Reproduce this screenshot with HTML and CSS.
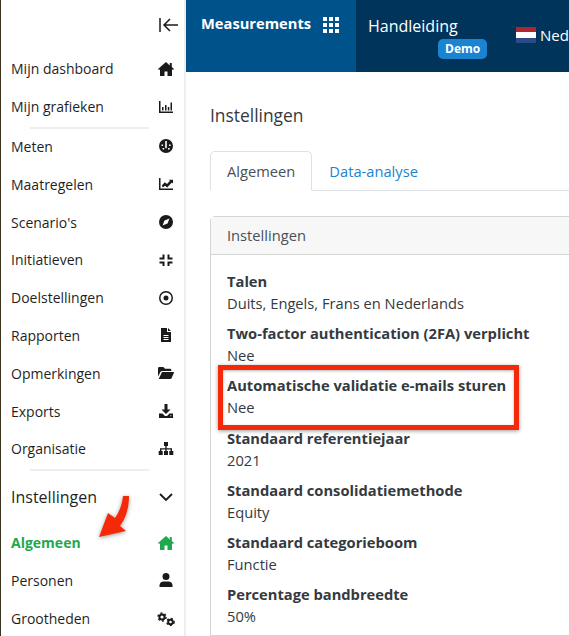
FILE: index.html
```html
<!DOCTYPE html>
<html lang="nl">
<head>
    <meta charset="UTF-8">
    <title>Instellingen</title>
    <link rel="stylesheet" href="styles.css">
</head>
<body>
    <div class="edge"></div>
    <aside class="sidebar">
        <div class="collapse">
            <svg class="collapse-icon" viewBox="0 0 20 16"><path d="M1 1v14M19 8H5M11 2L5 8l6 6"/></svg>
        </div>
        <ul class="menu">
            <li>Mijn dashboard <svg class="icon" viewBox="0 0 16 14"><path d="M8 0L0 7l1 1 1-.8V14h4.500V9.500h3V14H14V7.200l1 .8 1-1-2.200-2V1h-2v2.600z"/></svg></li>
            <li>Mijn grafieken <svg class="icon" viewBox="0 0 16 14"><path d="M1 1h1.500v10.500H15V13H1zM4 7h1.500v3.500H4zM7 5h1.500v5.500H7zM9.800 7h1.500v3.500H9.800zM12.500 2.500H14v8h-1.500z"/></svg></li>
            <li class="rule"></li>
            <li>Meten <svg class="icon" viewBox="0 0 16 16"><path fill-rule="evenodd" d="M8 1a7 7 0 1 1 0 14A7 7 0 0 1 8 1zM7.200 3v7a1.500 1.500 0 0 0 1.600 0V3zM3.500 6.500v1.600h1.600V6.500zM11 6.500v1.600h1.600V6.500zM4.600 10v1.600h1.600V10zM10 10v1.600h1.600V10z"/></svg></li>
            <li>Maatregelen <svg class="icon" viewBox="0 0 16 14"><path d="M1 1h1.500v10.500H15V13H1zM3.800 8.500l3-3.200 2.200 1.800 3-3.400-1.200-1H15v3.800l-1.100-1.100-4.700 5.100L7 8.700 4.800 10.500z"/></svg></li>
            <li>Scenario's <svg class="icon" viewBox="0 0 16 16"><path fill-rule="evenodd" d="M8 1a7 7 0 1 1 0 14A7 7 0 0 1 8 1zM11.500 4.500L6.500 6.500l-2 5 5-2z"/></svg></li>
            <li>Initiatieven <svg class="icon" viewBox="0 0 16 16"><path d="M4.500 2.500h2v5h-5v-2h3zM9.500 2.500h2v3h3v2h-5zM1.500 9.500h5V14h-2v-2.500h-3zM9.500 9.500h5v2h-3V14h-2z"/></svg></li>
            <li>Doelstellingen <svg class="icon" viewBox="0 0 16 16"><path fill-rule="evenodd" d="M8 1a7 7 0 1 1 0 14A7 7 0 0 1 8 1zm0 1.500a5.500 5.500 0 1 0 0 11 5.500 5.500 0 0 0 0-11zM8 5.500a2.500 2.500 0 1 1 0 5 2.500 2.500 0 0 1 0-5z"/></svg></li>
            <li>Rapporten <svg class="icon" viewBox="0 0 16 16"><path fill-rule="evenodd" d="M3 1h6v4h4v9.500a.5.500 0 0 1-.5.5h-9a.5.500 0 0 1-.5-.5zM10 1l3 3h-3zM5.500 8v1h5V8zM5.500 10v1h5v-1zM5.500 12v1h5v-1z"/></svg></li>
            <li>Opmerkingen <svg class="icon" viewBox="0 0 16 14"><path d="M0 2.500C0 1.700.5 1 1.300 1h4l1.700 1.700h5c.7 0 1.300.6 1.300 1.300v1H4.200c-.8 0-1.400.4-1.800 1.100L0 10.500zM4 6h11.300c.5 0 .8.500.6 1L13.500 12.300c-.2.400-.6.700-1 .7H.7z"/></svg></li>
            <li>Exports <svg class="icon" viewBox="0 0 16 16"><path fill-rule="evenodd" d="M6.500 1h3v5.500h3L8 11 3.500 6.500h3zM1 10.500h3.500L7 13h2l2.500-2.500H15V15H1zM12.300 12.300v1h1v-1z"/></svg></li>
            <li>Organisatie <svg class="icon" viewBox="0 0 16 16"><path d="M6 1h4v4H8.700v2.300H14V10h1.300v4h-4v-4h1.300V8.500H8.700V10H10v4H6v-4h1.300V8.500H3.400V10h1.300v4h-4v-4H2V7.300h5.300V5H6z"/></svg></li>
            <li class="rule"></li>
            <li class="group">Instellingen <svg class="icon chevron" viewBox="0 0 16 10"><path d="M2 2l6 6 6-6"/></svg></li>
            <li class="active">Algemeen <svg class="icon" viewBox="0 0 16 14"><path d="M8 0L0 7l1 1 1-.8V14h4.500V9.500h3V14H14V7.200l1 .8 1-1-2.200-2V1h-2v2.600z"/></svg></li>
            <li>Personen <svg class="icon" viewBox="0 0 16 16"><path d="M8 1a3.500 3.500 0 1 1 0 7 3.500 3.500 0 0 1 0-7zM1.500 15v-1.500C1.500 11 3.500 9.500 5.500 9.500h5c2 0 4 1.500 4 4V15z"/></svg></li>
            <li>Grootheden <svg class="icon wide" viewBox="0 0 18 16">
                <circle class="gear" cx="5" cy="7" r="2.600"/><circle class="gear-teeth" cx="5" cy="7" r="4"/>
                <circle class="gear" cx="13.500" cy="12" r="2.300"/><circle class="gear-teeth" cx="13.500" cy="12" r="3.600"/>
            </svg></li>
        </ul>
    </aside>
    <div class="page">
        <header class="topbar">
            <div class="brand">
                <span class="brand-name">Measurements</span>
                <span class="dots"><i></i><i></i><i></i><i></i><i></i><i></i><i></i><i></i><i></i></span>
            </div>
            <div class="manual">
                <span>Handleiding</span>
                <span class="badge">Demo</span>
            </div>
            <div class="lang">
                <span class="flag"></span>
                <span>Nederlands</span>
            </div>
        </header>
        <main class="content">
            <h1>Instellingen</h1>
            <nav class="tabs">
                <a class="tab current">Algemeen</a>
                <a class="tab">Data-analyse</a>
            </nav>
            <section class="card">
                <div class="card-head">Instellingen</div>
                <dl class="card-body">
                    <dt>Talen</dt>
                    <dd>Duits, Engels, Frans en Nederlands</dd>
                    <dt>Two-factor authentication (2FA) verplicht</dt>
                    <dd>Nee</dd>
                    <dt>Automatische validatie e-mails sturen</dt>
                    <dd>Nee</dd>
                    <dt>Standaard referentiejaar</dt>
                    <dd>2021</dd>
                    <dt>Standaard consolidatiemethode</dt>
                    <dd>Equity</dd>
                    <dt>Standaard categorieboom</dt>
                    <dd>Functie</dd>
                    <dt>Percentage bandbreedte</dt>
                    <dd>50%</dd>
                </dl>
            </section>
        </main>
    </div>
    <div class="highlight"></div>
    <svg class="arrow" viewBox="0 0 32 44"><path d="M1 43L10 19l7 5Q24 14 25 2h6Q31 20 22 32l6 5z"/></svg>
</body>
</html>
```
FILE: styles.css
```css
* {
    box-sizing: border-box;
}
html, body {
    height: 100%;
}
body {
    margin: 0;
    display: flex;
    overflow: hidden;
    background-color: white;
    color: #212529;
    font-family: "Open Sans", sans-serif;
    font-size: 14.700px;
}
.edge {
    width: 1px;
    flex: none;
    background-color: #3a3320;
}
.sidebar {
    width: 185px;
    flex: none;
    height: 636px;
    overflow: hidden;
    background-color: white;
    border-right: 2px solid #eeeeee;
    color: #1f1f1f;
    font-size: 14px;
}
.collapse {
    height: 50px;
    padding: 17px 5px 0 0;
    display: flex;
    justify-content: flex-end;
}
.collapse-icon {
    width: 20px;
    height: 16px;
    fill: none;
    stroke: #1a1a1a;
    stroke-width: 1.500;
}
.menu {
    list-style: none;
    margin: 0;
    padding: 0 10px;
}
.menu li {
    height: 37.800px;
    display: flex;
    align-items: center;
    justify-content: space-between;
}
.menu li.rule {
    height: 2px;
    margin: 1px 25px -1px 19px;
    background-color: #eeeeee;
}
.menu li.group {
    height: 46px;
    font-size: 16px;
    margin-top: 4px;
}
.menu li.active {
    color: #1fa84f;
    font-weight: 700;
    margin-top: 4px;
}
.icon {
    width: 16px;
    height: 16px;
    fill: #1a1a1a;
}
.icon.wide {
    width: 18px;
    margin-right: -1px;
}
.gear {
    fill: none;
    stroke: #1a1a1a;
    stroke-width: 2;
}
.gear-teeth {
    fill: none;
    stroke: #1a1a1a;
    stroke-width: 1.400;
    stroke-dasharray: 2 2.200;
}
.active .icon {
    fill: #1fa84f;
}
.chevron {
    fill: none;
    stroke: #1a1a1a;
    stroke-width: 1.800;
    height: 10px;
}
.page {
    flex: 1;
    min-width: 0;
    display: flex;
    flex-direction: column;
}
.topbar {
    height: 72px;
    flex: none;
    display: flex;
    background-color: #00345a;
    color: white;
    white-space: nowrap;
}
.brand {
    width: 170px;
    flex: none;
    padding: 13px 0 0 15px;
    display: flex;
    gap: 12px;
    align-items: flex-start;
    background-color: #00528a;
}
.brand-name {
    font-weight: 700;
    line-height: 20px;
}
.dots {
    width: 16px;
    margin-top: 4px;
    display: grid;
    grid-template-columns: repeat(3, 3.500px);
    gap: 2.500px;
}
.dots i {
    width: 3.500px;
    height: 3.500px;
    background-color: white;
}
.manual {
    width: 160px;
    flex: none;
    padding: 15px 0 0 12px;
    display: flex;
    flex-direction: column;
    font-size: 16px;
    line-height: 22px;
}
.badge {
    align-self: flex-start;
    margin: 2px 0 0 70px;
    padding: 0 7px;
    height: 20px;
    border-radius: 5px;
    background-color: #1b84d0;
    font-size: 12px;
    font-weight: 700;
    line-height: 20px;
}
.lang {
    display: flex;
    flex: none;
    align-items: flex-start;
    gap: 4px;
    padding-top: 24px;
    font-size: 15px;
    line-height: 22px;
}
.flag {
    width: 20px;
    height: 16px;
    margin-top: 3px;
    background: linear-gradient(#ad2730 33%, white 33%, white 66%, #2b4a86 66%);
}
.content {
    padding: 0 0 0 24px;
    min-width: 0;
}
h1 {
    margin: 30px 0 0;
    font-size: 17.400px;
    font-weight: 400;
    line-height: 26px;
    color: #343a40;
}
.tabs {
    display: flex;
    margin-top: 23px;
    height: 40px;
    border-bottom: 1px solid #dee2e6;
}
.tab {
    padding: 0 16px;
    line-height: 38px;
    color: #1b84d0;
    border: 1px solid transparent;
}
.tab.current {
    color: #495057;
    background-color: white;
    border-color: #dee2e6 #dee2e6 white;
    border-radius: 5px 5px 0 0;
    height: 40px;
}
.card {
    width: 420px;
    margin-top: 25px;
    border: 1px solid #d5d5d5;
    border-radius: 5px 0 0 0;
}
.card-head {
    height: 38px;
    padding-left: 16px;
    line-height: 36px;
    color: #495057;
    background-color: #f7f7f7;
    border-bottom: 1px solid #d5d5d5;
}
.card-body {
    margin: 0;
    padding: 15px 16px 0;
    line-height: 22px;
    color: #343a40;
}
dt {
    font-weight: 700;
    white-space: nowrap;
}
dd {
    margin: 0 0 8.200px;
}
.highlight {
    position: absolute;
    left: 218px;
    top: 365px;
    width: 301px;
    height: 65px;
    border: 5px solid #f5290a;
    box-shadow: 0 1px 4px rgba(0, 0, 0, 0.4), inset 0 1px 3px rgba(0, 0, 0, 0.3);
}
.arrow {
    position: absolute;
    left: 98px;
    top: 494px;
    width: 32px;
    height: 44px;
    fill: #f5290a;
    filter: drop-shadow(0 1px 2px rgba(0, 0, 0, 0.4));
}
```
